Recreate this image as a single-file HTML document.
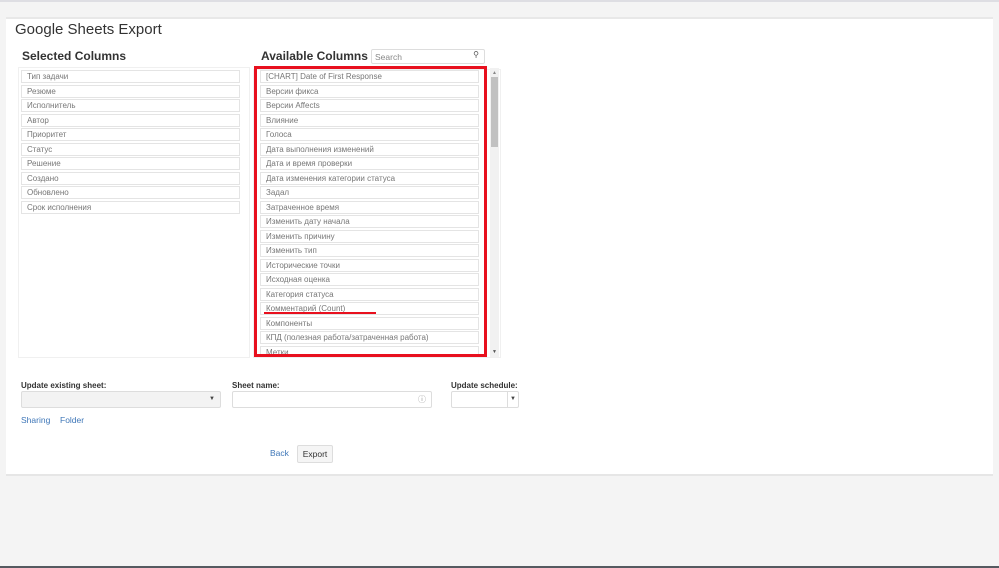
<!DOCTYPE html>
<html><head><meta charset="utf-8"><style>
*{box-sizing:border-box;margin:0;padding:0}
body{width:999px;height:568px;background:#f4f4f4;font-family:"Liberation Sans",Arial,sans-serif;position:relative;overflow:hidden}
.top{position:absolute;left:0;top:0;width:999px;height:2px;background:#dedee3}
.bot{position:absolute;left:0;top:566px;width:999px;height:2px;background:#555a60}
.panel{position:absolute;left:6px;top:17px;width:987px;height:459px;background:#fff;border-top:2px solid #e8e8e8;border-bottom:2px solid #e6e6e6}
.abs{position:absolute}
h1{position:absolute;left:15px;top:21px;font-size:15px;font-weight:normal;color:#333}
h2{position:absolute;font-size:12px;font-weight:bold;color:#333}
.list{position:absolute}
.it{height:13px;margin-bottom:1.5px;border:1px solid #e4e4e4;font-size:8px;color:#777;padding-left:5px;line-height:11px;white-space:nowrap;overflow:hidden;background:#fff}
.lbl{position:absolute;font-size:8px;font-weight:bold;color:#333}
.inp{position:absolute;border:1px solid #ddd;border-radius:2px;height:17px}
.lnk{position:absolute;font-size:8.5px;color:#3f77b8}
</style></head><body>
<div class="top"></div>
<div class="panel"></div>
<h1>Google Sheets Export</h1>
<h2 style="left:22px;top:49px">Selected Columns</h2>
<h2 style="left:261px;top:49px">Available Columns</h2>
<div class="inp" style="left:371px;top:49px;width:114px;height:15px;border-color:#ddd"><span style="position:absolute;left:3px;top:2px;font-size:8.5px;color:#888">Search</span><span style="position:absolute;right:5px;top:0px;font-size:8px;color:#555">&#9906;</span></div>
<div class="abs" style="left:18px;top:67px;width:232px;height:291px;border:1px solid #f0f0f0"></div>
<div class="list" style="left:21px;top:70px;width:219px">
<div class="it">Тип задачи</div><div class="it">Резюме</div><div class="it">Исполнитель</div><div class="it">Автор</div><div class="it">Приоритет</div><div class="it">Статус</div><div class="it">Решение</div><div class="it">Создано</div><div class="it">Обновлено</div><div class="it">Срок исполнения</div>
</div>
<div class="abs" style="left:253px;top:69px;width:248px;height:289px;border:1px solid #f0f0f0"></div>
<div class="abs" style="left:257px;top:69px;width:225px;height:286px;overflow:hidden">
<div class="list" style="left:3px;top:1px;width:219px">
<div class="it">[CHART] Date of First Response</div><div class="it">Версии фикса</div><div class="it">Версии Affects</div><div class="it">Влияние</div><div class="it">Голоса</div><div class="it">Дата выполнения изменений</div><div class="it">Дата и время проверки</div><div class="it">Дата изменения категории статуса</div><div class="it">Задал</div><div class="it">Затраченное время</div><div class="it">Изменить дату начала</div><div class="it">Изменить причину</div><div class="it">Изменить тип</div><div class="it">Исторические точки</div><div class="it">Исходная оценка</div><div class="it">Категория статуса</div><div class="it">Комментарий (Count)</div><div class="it">Компоненты</div><div class="it">КПД (полезная работа/затраченная работа)</div><div class="it">Метки</div>
</div></div>
<div class="abs" style="left:254px;top:66px;width:233px;height:291px;border:3px solid #e8101e"></div>
<div class="abs" style="left:264px;top:312px;width:112px;height:2px;background:#e8101e"></div>
<div class="abs" style="left:490px;top:68px;width:9px;height:289px;background:#f1f1f1"></div>
<div class="abs" style="left:491px;top:77px;width:7px;height:70px;background:#c1c1c1"></div>
<div class="abs" style="left:492px;top:70px;font-size:5px;color:#888">&#9650;</div>
<div class="abs" style="left:492px;top:349px;font-size:5px;color:#555">&#9660;</div>
<div class="lbl" style="left:21px;top:381px">Update existing sheet:</div>
<div class="lbl" style="left:232px;top:381px">Sheet name:</div>
<div class="lbl" style="left:451px;top:381px">Update schedule:</div>
<div class="inp" style="left:21px;top:391px;width:200px;background:#f3f3f3"><span style="position:absolute;right:5px;top:4px;font-size:6px;color:#444">&#9660;</span></div>
<div class="inp" style="left:232px;top:391px;width:200px"><span style="position:absolute;right:5px;top:2px;font-size:8px;color:#999">&#9432;</span></div>
<div class="inp" style="left:451px;top:391px;width:68px"><div style="position:absolute;right:10px;top:0;width:1px;height:15px;background:#ddd"></div><span style="position:absolute;right:2px;top:4px;font-size:6px;color:#444">&#9660;</span></div>
<div class="lnk" style="left:21px;top:415px">Sharing</div>
<div class="lnk" style="left:60px;top:415px">Folder</div>
<div class="lnk" style="left:270px;top:448px">Back</div>
<div class="abs" style="left:297px;top:445px;width:36px;height:18px;border:1px solid #ddd;border-radius:2px;background:#f5f5f5;font-size:8.5px;color:#333;text-align:center;line-height:16px">Export</div>
<div class="bot"></div>
</body></html>
